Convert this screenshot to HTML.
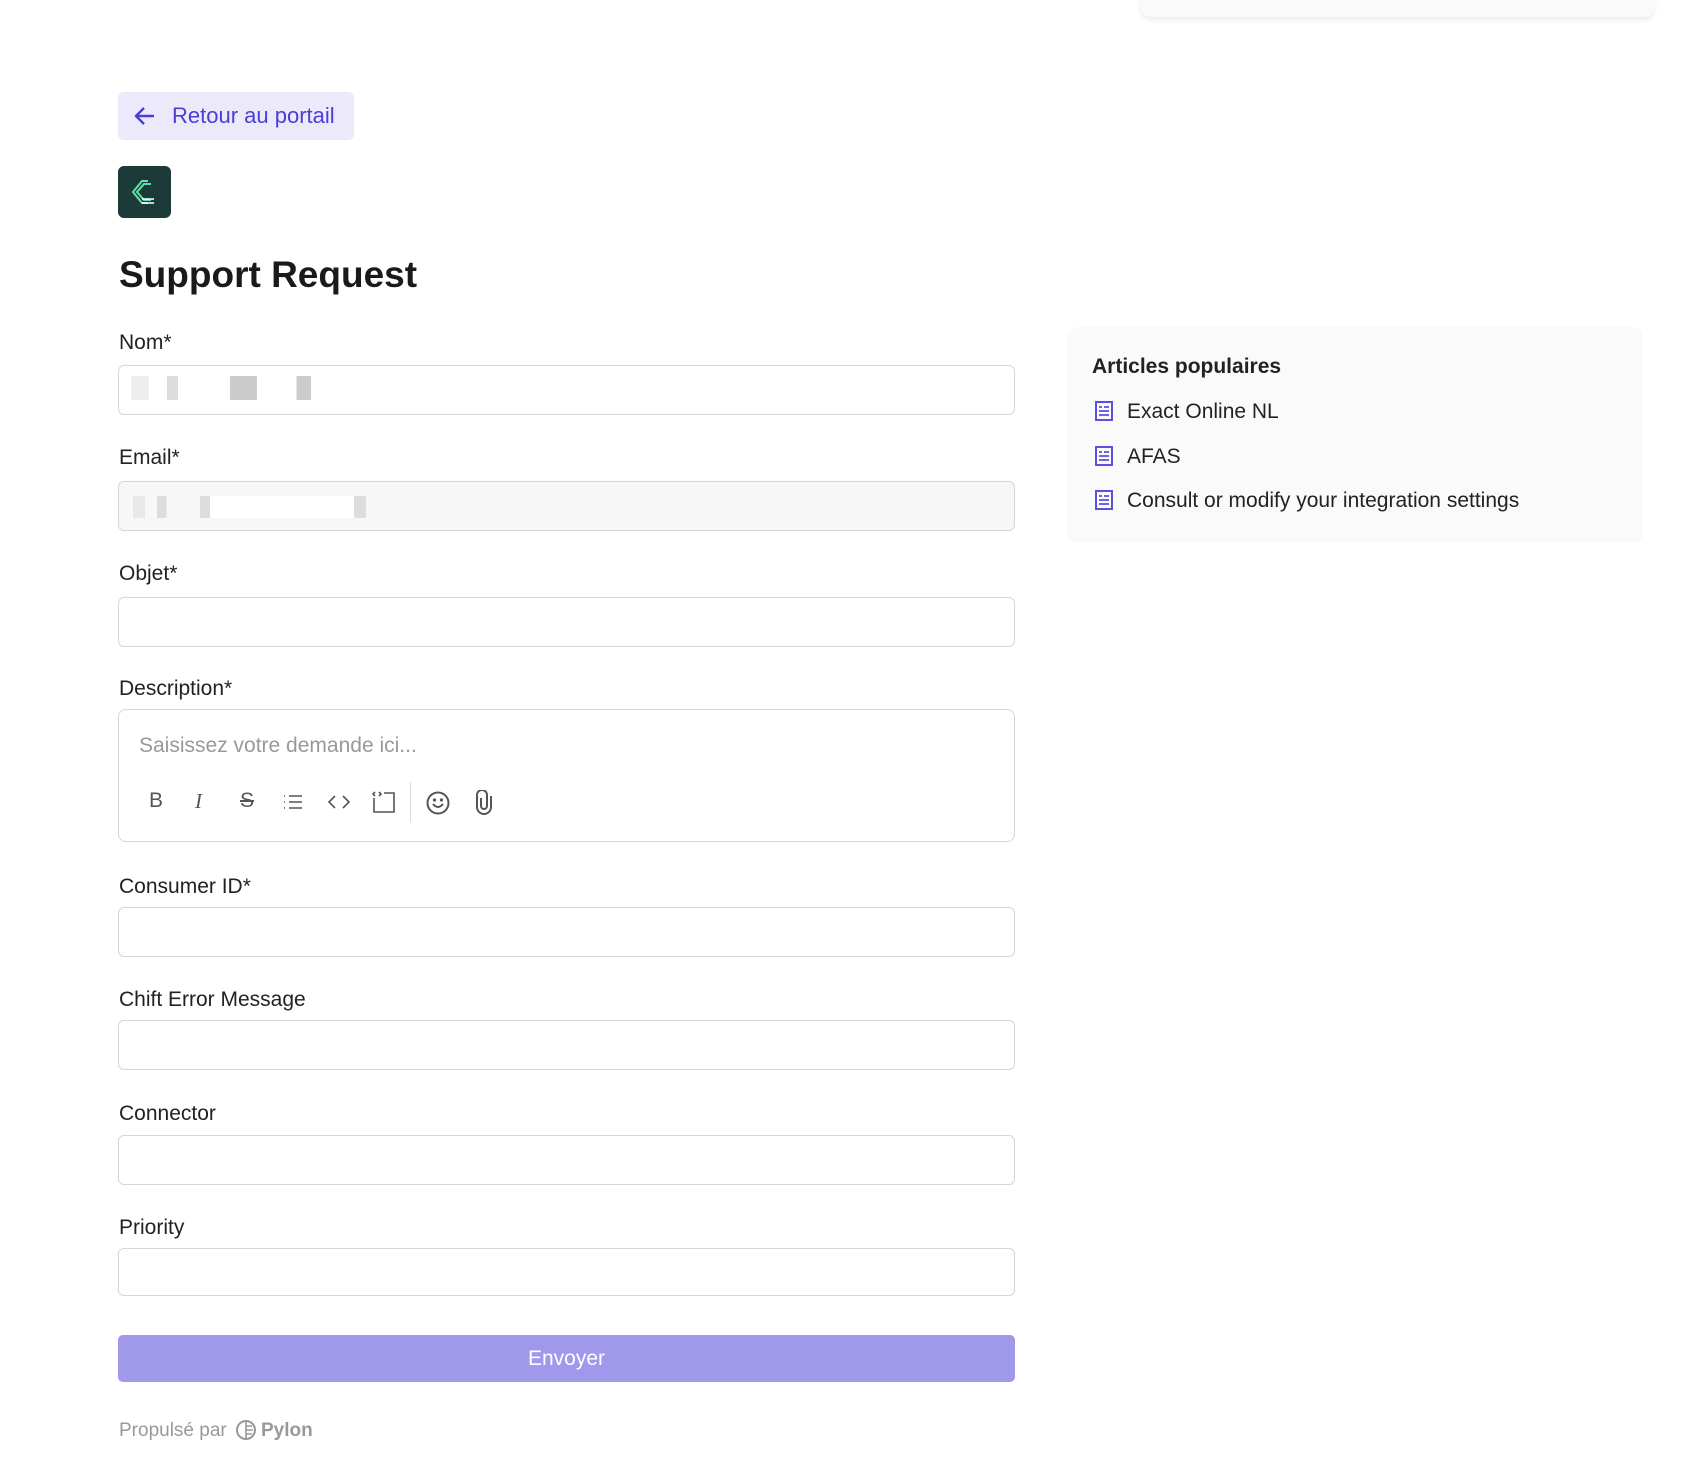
<!DOCTYPE html>
<html><head><meta charset="utf-8"><style>
*{box-sizing:border-box;margin:0;padding:0}
body{width:1692px;height:1468px;background:#fff;font-family:"Liberation Sans",sans-serif;color:#1a1a1a;position:relative;overflow:hidden}
.a{position:absolute}
.lbl{position:absolute;left:119px;font-size:21px;color:#222;line-height:24px}
.inp{position:absolute;left:118px;width:897px;height:50px;border:1px solid #d6d6d6;border-radius:6px;background:#fff}
.ico{stroke:#555;fill:none;stroke-width:1.6}
</style></head><body>
<div class="a" style="left:1141px;top:-20px;width:513px;height:37px;background:#fafafa;border-radius:10px;box-shadow:0 3px 6px rgba(0,0,0,.08)"></div>

<div class="a" style="left:118px;top:92px;width:236px;height:48px;background:#ece9fb;border-radius:6px;color:#4a3ed6;font-size:22px;line-height:48px;padding-left:54px">Retour au portail
<svg class="a" style="left:16px;top:14px" width="22" height="20" viewBox="0 0 22 20"><path d="M20 10H3M10 2L2 10l8 8" stroke="#4a3ed6" stroke-width="2.4" fill="none"/></svg></div>

<div class="a" style="left:118px;top:166px;width:53px;height:52px;background:#1b3a38;border-radius:6px">
<svg width="53" height="52" viewBox="0 0 53 52"><path d="M30 15h-6l-9 11 9 11h6M33 18h-7l-7 8 7 8h7" stroke="#5fe0a8" stroke-width="2" fill="none"/><path d="M24 33h12M24 37h12" stroke="#fff" stroke-width="1.6"/></svg></div>

<div class="a" style="left:119px;top:254px;font-size:37px;font-weight:bold;color:#1a1a1a">Support Request</div>

<div class="lbl" style="top:331px">Nom*</div>
<div class="inp" style="top:365px"><div class="a" style="left:12px;top:10px;width:180px;height:24px;background:linear-gradient(90deg,#eee 0 10%,#fff 10% 20%,#ddd 20% 26%,#fff 26% 55%,#ccc 55% 70%,#fff 70% 92%,#ccc 92%)"></div></div>

<div class="lbl" style="top:446px">Email*</div>
<div class="inp" style="top:481px;background:#f7f7f7"><div class="a" style="left:14px;top:14px;width:240px;height:22px;background:linear-gradient(90deg,#e8e8e8 0 5%,#f7f7f7 5% 10%,#ddd 10% 14%,#f7f7f7 14% 28%,#ddd 28% 32%,#fff 32% 92%,#ddd 92% 97%,#f7f7f7 97%)"></div></div>

<div class="lbl" style="top:562px">Objet*</div>
<div class="inp" style="top:597px"></div>

<div class="lbl" style="top:677px">Description*</div>
<div class="inp" style="top:709px;height:133px;border-radius:8px">
<div class="a" style="left:20px;top:24px;font-size:21px;color:#999">Saisissez votre demande ici...</div>
<div class="a" style="left:30px;top:79px;font-size:21px;color:#555">B</div>
<div class="a" style="left:76px;top:79px;font-size:21px;color:#555;font-style:italic;font-family:'Liberation Serif',serif">I</div>
<div class="a" style="left:121px;top:79px;font-size:21px;color:#555;text-decoration:line-through">S</div>
<svg class="a ico" style="left:163px;top:82px" width="22" height="20"><path d="M2 4h1M2 10h1M2 16h1M7 4h13M7 10h13M7 16h13"/></svg>
<svg class="a ico" style="left:208px;top:82px" width="24" height="20"><path d="M8 4l-6 6 6 6M16 4l6 6-6 6"/></svg>
<svg class="a ico" style="left:253px;top:80px" width="24" height="24"><path d="M12 3h10v19H2V8M3 2L1 4l2 2M7 2l2 2-2 2"/></svg>
<div class="a" style="left:291px;top:72px;width:1px;height:40px;background:#ddd"></div>
<svg class="a ico" style="left:306px;top:80px" width="26" height="26"><circle cx="13" cy="13" r="10.5" stroke-width="2"/><path d="M8 14q5 6 10 0" stroke-width="2"/><circle cx="9.5" cy="10" r=".8"/><circle cx="16.5" cy="10" r=".8"/></svg>
<svg class="a ico" style="left:355px;top:80px" width="20" height="26"><path d="M7 8v8a3 3 0 006 0V5a5 5 0 00-10 0v12a7 7 0 0014 0V6" stroke-width="2"/></svg>
</div>

<div class="lbl" style="top:875px">Consumer ID*</div>
<div class="inp" style="top:907px"></div>
<div class="lbl" style="top:988px">Chift Error Message</div>
<div class="inp" style="top:1020px"></div>
<div class="lbl" style="top:1102px">Connector</div>
<div class="inp" style="top:1135px"></div>
<div class="lbl" style="top:1216px">Priority</div>
<div class="inp" style="top:1248px;height:48px"></div>

<div class="a" style="left:118px;top:1335px;width:897px;height:47px;background:#9f98eb;border-radius:5px;color:#fff;font-size:21px;text-align:center;line-height:47px">Envoyer</div>

<div class="a" style="left:119px;top:1420px;font-size:19px;color:#999">Propulsé par</div>
<svg class="a" style="left:235px;top:1419px" width="22" height="22"><circle cx="11" cy="11" r="9" stroke="#999" stroke-width="2" fill="none"/><path d="M11 2v18M11 7h6M11 11h7M11 15h6" stroke="#999" stroke-width="1.6"/></svg>
<div class="a" style="left:261px;top:1420px;font-size:19px;color:#999;font-weight:bold">Pylon</div>

<div class="a" style="left:1067px;top:327px;width:576px;height:216px;background:#fafafa;border-radius:10px">
<div class="a" style="left:25px;top:28px;font-size:21px;font-weight:bold;color:#222">Articles populaires</div>
<div class="a" style="left:60px;top:73px;font-size:21px;color:#222">Exact Online NL</div>
<div class="a" style="left:60px;top:118px;font-size:21px;color:#222">AFAS</div>
<div class="a" style="left:60px;top:162px;font-size:21px;color:#222">Consult or modify your integration settings</div>
<svg class="a" style="left:27px;top:73px" width="20" height="22"><rect x="2" y="2" width="16" height="18" stroke="#5b4ee0" stroke-width="2" fill="none"/><path d="M5 7h3M10 7h5M5 11h10M5 15h10" stroke="#5b4ee0" stroke-width="1.8"/></svg>
<svg class="a" style="left:27px;top:118px" width="20" height="22"><rect x="2" y="2" width="16" height="18" stroke="#5b4ee0" stroke-width="2" fill="none"/><path d="M5 7h3M10 7h5M5 11h10M5 15h10" stroke="#5b4ee0" stroke-width="1.8"/></svg>
<svg class="a" style="left:27px;top:162px" width="20" height="22"><rect x="2" y="2" width="16" height="18" stroke="#5b4ee0" stroke-width="2" fill="none"/><path d="M5 7h3M10 7h5M5 11h10M5 15h10" stroke="#5b4ee0" stroke-width="1.8"/></svg>
</div>
</body></html>
